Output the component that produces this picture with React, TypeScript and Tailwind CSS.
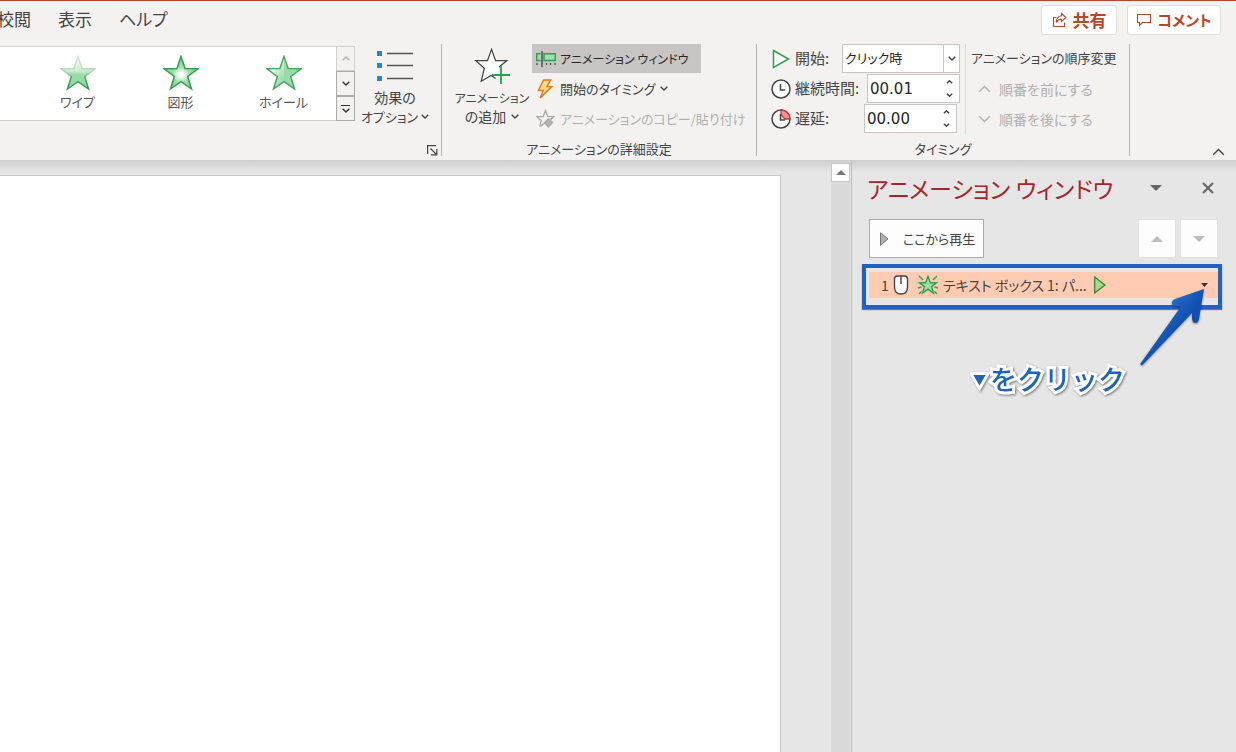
import type { ReactNode } from "react";

const STAR = "M18 1.5 L22.1 13.6 L35 13.8 L24.7 21.5 L28.5 34 L18 26.6 L7.5 34 L11.3 21.5 L1 13.8 L13.9 13.6 Z";

const tabs = ["校閲", "表示", "ヘルプ"];

const effects = [
  { name: "ワイプ", kind: "wipe" as const },
  { name: "図形", kind: "shape" as const },
  { name: "ホイール", kind: "wheel" as const },
];

function Chevron({ up = false, className = "h-[5px] w-2" }: { up?: boolean; className?: string }) {
  return (
    <svg aria-hidden viewBox="0 0 8 5" className={`shrink-0 ${className}`}>
      <path
        d={up ? "M0.7 4.2 L4 1 L7.3 4.2" : "M0.7 0.8 L4 4 L7.3 0.8"}
        fill="none"
        stroke="currentColor"
        strokeWidth="1.4"
        vectorEffect="non-scaling-stroke"
      />
    </svg>
  );
}

function EffectStar({ kind }: { kind: "wipe" | "shape" | "wheel" }) {
  return (
    <svg aria-hidden viewBox="0 0 36 36" className="h-9 w-9">
      <defs>
        <linearGradient id="wipe-fill" x1="0" y1="0" x2="0" y2="1">
          <stop offset="0" stopColor="#ffffff" />
          <stop offset="0.45" stopColor="#c9ead0" />
          <stop offset="0.55" stopColor="#9fdcab" />
          <stop offset="1" stopColor="#8fd49d" />
        </linearGradient>
        <linearGradient id="wipe-line" x1="0" y1="0" x2="0" y2="1">
          <stop offset="0" stopColor="#d3ecd8" />
          <stop offset="0.5" stopColor="#a9d7b2" />
          <stop offset="0.65" stopColor="#4aa862" />
          <stop offset="1" stopColor="#2f9a4c" />
        </linearGradient>
        <radialGradient id="shape-fill" cx="0.5" cy="0.56" r="0.4">
          <stop offset="0.1" stopColor="#ffffff" />
          <stop offset="0.35" stopColor="#d5f0da" />
          <stop offset="0.6" stopColor="#9fdcab" />
          <stop offset="1" stopColor="#8ed39c" />
        </radialGradient>
        <linearGradient id="wheel-fill" x1="0.1" y1="0.1" x2="0.7" y2="0.6">
          <stop offset="0.3" stopColor="#f5fbf6" />
          <stop offset="0.6" stopColor="#b9e5c2" />
          <stop offset="1" stopColor="#98d8a5" />
        </linearGradient>
      </defs>
      {kind === "wipe" && <path d={STAR} fill="url(#wipe-fill)" stroke="url(#wipe-line)" strokeWidth="1.5" />}
      {kind === "shape" && <path d={STAR} fill="url(#shape-fill)" stroke="#379e52" strokeWidth="1.5" />}
      {kind === "wheel" && (
        <>
          <path d={STAR} fill="url(#wheel-fill)" stroke="#43a75c" strokeWidth="1.5" />
          <path d="M18 4 L21.2 14.5 L32 15 L23.3 21.3 L26.5 31 L18 25 Z" fill="#9adaa7" />
        </>
      )}
    </svg>
  );
}

function Clock({ delay = false }: { delay?: boolean }) {
  return (
    <svg aria-hidden viewBox="0 0 20 20" className="h-5 w-5 shrink-0">
      <circle cx="10" cy="10" r="9" fill="#fcfcfc" stroke="#444" strokeWidth="1.5" />
      {delay && (
        <path d="M10 1 A9 9 0 0 1 19 10 L14 10 L10 6 Z" fill="#ff8f8f" stroke="#d13438" strokeWidth="1.3" />
      )}
      <path d="M9.5 5 V11 H14" fill="none" stroke="#444" strokeWidth="1.5" />
    </svg>
  );
}

function Group({ label, className, children }: { label?: string; className: string; children: ReactNode }) {
  return (
    <section
      aria-label={label}
      className={`flex h-28 shrink-0 flex-col justify-between border-r border-[#b3b0ad] ${className}`}
    >
      {children}
      {label && <p className="text-center text-[13px] leading-[14px]">{label}</p>}
    </section>
  );
}

function SpinField({ id, value, className }: { id: string; value: string; className: string }) {
  return (
    <div className={`flex h-[29px] border border-[#c8c6c4] bg-white ${className}`}>
      <input
        id={id}
        defaultValue={value}
        className="w-0 min-w-0 flex-1 pl-[2px] pt-[2px] font-['DejaVu_Sans',sans-serif] text-[15px] text-[#262626] outline-none"
      />
      <div className="flex w-5 flex-col items-center justify-around">
        <button type="button" aria-label="増やす" className="flex h-3 items-center">
          <Chevron up className="h-1 w-[7px]" />
        </button>
        <button type="button" aria-label="減らす" className="flex h-3 items-center">
          <Chevron className="h-1 w-[7px]" />
        </button>
      </div>
    </div>
  );
}

function TitleBar() {
  return (
    <header className="flex h-10 items-start justify-between border-t border-[#b7472a]">
      <nav className="-ml-[3px] flex gap-[27px] pt-[6px] text-[17px] leading-6 text-[#444]">
        {tabs.map((t) => (
          <button key={t} type="button" className="whitespace-nowrap">
            {t}
          </button>
        ))}
      </nav>
      <div className="flex gap-[10px] pr-[15px] pt-1 font-bold text-[#b7472a]">
        <button
          type="button"
          className="flex h-[30px] w-[76px] items-center justify-center gap-[5px] rounded-[3px] border border-[#e1dfdd] bg-white text-[17px]"
        >
          <svg aria-hidden viewBox="0 0 16 16" className="h-4 w-4 shrink-0" fill="none" stroke="currentColor" strokeWidth="1.1">
            <path d="M4.5 5.5 H1.5 V14.5 H12.5 V10.5" />
            <path d="M9.5 1.5 L14 5.5 L9.5 9.5 V7.3 C6.8 7.2 5.3 8.5 4.2 10.5 C4.4 6.5 6.5 4.2 9.5 3.8 Z" />
          </svg>
          共有
        </button>
        <button
          type="button"
          className="flex h-[30px] w-[94px] items-center justify-center gap-[5px] rounded-[3px] border border-[#e1dfdd] bg-white text-[15px]"
        >
          <svg aria-hidden viewBox="0 0 16 16" className="h-4 w-4 shrink-0" fill="none" stroke="currentColor" strokeWidth="1.1">
            <path d="M1.5 2.5 H14.5 V10.5 H6.5 L3.5 13.5 V10.5 H1.5 Z" />
          </svg>
          コメント
        </button>
      </div>
    </header>
  );
}

function GalleryGroup() {
  return (
    <Group className="w-[442px]">
      <div className="flex">
        <div className="mt-[2px] flex h-[75px] w-[355px] border-y border-[#d2d0ce] bg-white">
          <div className="flex flex-1 pl-[26px]">
            {effects.map((e) => (
              <button key={e.name} type="button" className="flex w-[103px] flex-col items-center pt-2 text-[13px] leading-[22px] text-[#555]">
                <EffectStar kind={e.kind} />
                {e.name}
              </button>
            ))}
          </div>
          <div className="-my-px flex w-[19px] flex-col text-[#333]">
            <button type="button" aria-label="前の行" disabled className="flex flex-1 items-center justify-center border border-[#d2d0ce] bg-[#f3f2f1] text-[#b3b0ad]">
              <Chevron up />
            </button>
            <button type="button" aria-label="次の行" className="flex flex-1 items-center justify-center border border-[#aeaaa8] bg-[#f3f2f1]">
              <Chevron />
            </button>
            <button type="button" aria-label="その他" className="flex flex-1 flex-col items-center justify-center gap-[2px] border border-[#aeaaa8] bg-[#f3f2f1]">
              <span className="h-px w-[9px] bg-[#333]" />
              <Chevron />
            </button>
          </div>
        </div>
        <button type="button" className="flex w-20 flex-col items-center pt-1 text-[14px] leading-[19px]">
          <svg aria-hidden viewBox="0 0 36 36" className="mb-1 h-9 w-9">
            <path d="M0 3h5v5H0z M0 15h5v5H0z M0 28h5v5H0z" fill="#1e8ad6" />
            <path d="M10 5.5h26 M10 17.5h26 M10 30.5h26" stroke="#555" strokeWidth="1.4" />
          </svg>
          <span>効果の</span>
          <span className="flex items-center gap-[3px] whitespace-nowrap text-[13px]">
            オプション
            <Chevron />
          </span>
        </button>
      </div>
      <button type="button" aria-label="アニメーションのオプション" className="mr-[3px] self-end">
        <svg aria-hidden viewBox="0 0 11 11" className="h-[11px] w-[11px]" fill="none" stroke="#444" strokeWidth="1.2">
          <path d="M0.6 9 V0.6 H9 M3.5 3.5 L9 9 M9.8 4 V9.8 H4" />
        </svg>
      </button>
    </Group>
  );
}

function AdvancedGroup() {
  return (
    <Group label="アニメーションの詳細設定" className="w-[315px]">
      <div className="flex">
        <button type="button" className="ml-[10px] flex w-20 shrink-0 flex-col items-center pt-1 text-[14px] leading-[19px]">
          <svg aria-hidden viewBox="0 0 40 40" className="mb-1 h-9 w-10">
            <path
              d="M24 34 L19 30.5 L8 37 L11.5 22.5 L2 14 H15 L19.5 1.5 L24 14 H36.5 L28 21"
              fill="#fbfdfe"
              stroke="#444"
              strokeWidth="1.4"
            />
            <path d="M30 20 V40 M20 30 H40" stroke="#27a04b" strokeWidth="2" />
          </svg>
          <span className="whitespace-nowrap text-[12px]">アニメーション</span>
          <span className="flex items-center gap-[5px] whitespace-nowrap">
            の追加
            <Chevron />
          </span>
        </button>
        <div className="flex flex-col items-start whitespace-nowrap text-[13px]">
          <button type="button" aria-pressed className="flex h-[29px] w-[169px] items-center gap-1 bg-[#c8c6c4] pl-1 text-[12px] text-[#262626]">
            <svg aria-hidden viewBox="0 0 20 16" className="h-4 w-5 shrink-0">
              <path d="M4.5 2.7 H0.7 V9.5 H4.5 M8 2.7 H19.3 V9.5 H8 Z" fill="#a4dbb0" stroke="#2f9e4d" strokeWidth="1.4" />
              <path d="M6 0 V16" stroke="#333" strokeWidth="1.2" />
              <path d="M1 12v2 M10.5 12v2 M14.5 12v2 M19 12v2" stroke="#444" strokeWidth="1.2" />
            </svg>
            アニメーション ウィンドウ
          </button>
          <button type="button" className="flex h-[31px] items-center gap-[5px] pl-1">
            <svg aria-hidden viewBox="0 0 20 22" className="h-[22px] w-[19px] shrink-0">
              <path d="M8 1.5 H15.5 L11.5 8.500 H16.500 L4.500 20.500 L7.500 12.500 H2.500 Z" fill="#ffd98a" stroke="#e07a1a" strokeWidth="1.5" />
            </svg>
            開始のタイミング
            <Chevron />
          </button>
          <button type="button" disabled className="flex h-[29px] items-center gap-[5px] pl-1 text-[#b1afad]">
            <svg aria-hidden viewBox="0 0 20 20" className="h-5 w-[19px] shrink-0" stroke="#aaa" strokeWidth="1.4">
              <path d="M5 15 L4 18 L5.5 11.5 L0.8 7.5 H7.5 L10 1 L12.5 7.5 H18.5 L15 11 M5 17.5 L9.5 14" fill="none" />
              <path d="M9 14 L13 10 L17.5 13.5 L13 18.5 Z M15 11 L19 7" fill="#b5b3b1" />
            </svg>
            アニメーションのコピー/貼り付け
          </button>
        </div>
      </div>
    </Group>
  );
}

function TimingGroup() {
  return (
    <Group label="タイミング" className="w-[373px]">
      <div className="flex whitespace-nowrap">
        <div className="ml-[14px] w-[195px] border-r border-[#dad8d6] text-[15px]">
          <div className="flex h-[30px] items-center pb-px">
            <svg aria-hidden viewBox="0 0 20 20" className="mr-1 h-5 w-5">
              <path d="M2.5 1.5 L17.5 10 L2.5 18.5 Z" fill="#fafdfa" stroke="#2f9e4d" strokeWidth="1.5" />
            </svg>
            <label htmlFor="start" className="pb-px">
              開始:
            </label>
            <div className="relative ml-auto mr-[5px] h-[29px] w-[118px]">
              <select
                id="start"
                className="h-full w-full appearance-none border border-[#c8c6c4] bg-white pb-[2px] pl-[2px] text-[13px] text-[#262626] outline-none"
              >
                <option>クリック時</option>
              </select>
              <span className="pointer-events-none absolute inset-y-0 right-0 flex w-[17px] items-center justify-center border-l border-[#c8c6c4]">
                <Chevron />
              </span>
            </div>
          </div>
          <div className="flex h-[30px] items-center pb-px">
            <Clock />
            <label htmlFor="duration" className="ml-1 pb-px">
              継続時間:
            </label>
            <SpinField id="duration" value="00.01" className="ml-auto mr-[5px] w-[93px]" />
          </div>
          <div className="flex h-[30px] items-center pb-px">
            <Clock delay />
            <label htmlFor="delay" className="ml-1 pb-px">
              遅延:
            </label>
            <SpinField id="delay" value="00.00" className="ml-auto mr-2 w-[93px]" />
          </div>
        </div>
        <div className="flex flex-col items-start pl-[5px] text-[14px]">
          <p className="flex h-[30px] items-center pb-[2px] text-[13px]">アニメーションの順序変更</p>
          <button type="button" disabled className="flex h-[30px] items-center gap-2 pl-[7px] text-[#b1afad]">
            <Chevron up className="h-2 w-[13px]" />
            順番を前にする
          </button>
          <button type="button" disabled className="flex h-[30px] items-center gap-2 pl-[7px] text-[#b1afad]">
            <Chevron className="h-2 w-[13px]" />
            順番を後にする
          </button>
        </div>
      </div>
    </Group>
  );
}

function AnimationPane() {
  return (
    <aside className="w-[385px] shrink-0 border-l border-[#bdbdbd] pt-[11px]">
      <div className="flex items-center pl-[15px] pr-[22px]">
        <h2 className="flex-1 whitespace-nowrap pt-px text-[23px] leading-[33px] text-[#a4262c]">アニメーション ウィンドウ</h2>
        <button type="button" aria-label="作業ウィンドウのオプション" className="mr-10">
          <svg aria-hidden viewBox="0 0 12 6" className="h-[6px] w-3">
            <path d="M0 0 H12 L6 6 Z" fill="#666" />
          </svg>
        </button>
        <button type="button" aria-label="閉じる">
          <svg aria-hidden viewBox="0 0 12 12" className="h-3 w-3">
            <path d="M1 1 L11 11 M11 1 L1 11" stroke="#666" strokeWidth="2" />
          </svg>
        </button>
      </div>

      <div className="mt-[14px] flex gap-1 pl-[17px] pr-[18px]">
        <button type="button" className="mr-auto flex h-[39px] w-[115px] items-center gap-[14px] border border-[#ababab] bg-[#fdfdfd] pl-[10px] text-[13px] whitespace-nowrap">
          <svg aria-hidden viewBox="0 0 9 14" className="h-[14px] w-[9px]">
            <path d="M0.5 0.7 L8 7 L0.5 13.3 Z" fill="#b0b0b0" stroke="#777" />
          </svg>
          ここから再生
        </button>
        <button type="button" disabled aria-label="前に移動" className="flex h-[39px] w-[38px] items-center justify-center border border-[#e1e1e1] bg-[#fdfdfd]">
          <svg aria-hidden viewBox="0 0 12 6" className="h-[6px] w-3">
            <path d="M0 6 H12 L6 0 Z" fill="#bbb" />
          </svg>
        </button>
        <button type="button" disabled aria-label="後に移動" className="flex h-[39px] w-[38px] items-center justify-center border border-[#e1e1e1] bg-[#fdfdfd]">
          <svg aria-hidden viewBox="0 0 12 6" className="h-[6px] w-3">
            <path d="M0 0 H12 L6 6 Z" fill="#bbb" />
          </svg>
        </button>
      </div>

      <div className="relative ml-[10px] mr-[14px] mt-[6px] border-4 border-[#1f63c0] pb-[7px] pl-[3px] pt-1 shadow-[0_1px_1px_#777]">
        <ul>
          <li className="flex h-[26px] items-center whitespace-nowrap bg-[#ffccb3] pl-3 text-[14px]">
            1
            <svg aria-hidden viewBox="0 0 16 20" className="ml-1 h-5 w-4">
              <path d="M1.5 4 Q1.5 1 4.5 1 H11.5 Q14.5 1 14.5 4 V12 Q14.5 19 8 19 Q1.5 19 1.5 12 Z" fill="#fff" stroke="#444" strokeWidth="1.4" />
              <path d="M8 1 V9" stroke="#444" strokeWidth="1.4" />
            </svg>
            <svg aria-hidden viewBox="0 0 22 22" className="ml-2 h-[22px] w-[22px]">
              <path d="M11 2.5 L13.3 8.8 H19.5 L14.6 12.6 L16.5 19 L11 15.2 L5.5 19 L7.4 12.6 L2.5 8.8 H8.7 Z" fill="#a0dcab" stroke="#2f9e4d" strokeWidth="1.4" />
              <path d="M2 2 L6 6 M20 2 L16 6 M1 14 L4.5 13 M21 14 L17.5 13 M2 20 L4.5 17.5 M20 20 L17.5 17.5" stroke="#2f9e4d" strokeWidth="1.4" />
            </svg>
            <span className="ml-1">テキスト ボックス 1: パ...</span>
            <svg aria-hidden viewBox="0 0 12 18" className="ml-[7px] h-[18px] w-3">
              <path d="M0.7 1 L11 9 L0.7 17 Z" fill="#a0dc8c" stroke="#3a7d2c" strokeWidth="1.2" />
            </svg>
            <button type="button" aria-label="効果のメニュー" className="ml-auto mr-[10px]">
              <svg aria-hidden viewBox="0 0 7 4" className="h-1 w-[7px]">
                <path d="M0 0 H7 L3.5 4 Z" fill="#333" />
              </svg>
            </button>
          </li>
        </ul>

        {/* Callout over the pane: arrow tip sits under the menu button */}
        <svg aria-hidden viewBox="0 0 68 82" className="absolute right-[10px] top-[20px] h-[82px] w-[68px] drop-shadow-[0_1px_1px_#0006]">
          <defs>
            <linearGradient id="arrow-fill" x1="0.3" y1="0.2" x2="0.6" y2="0.5">
              <stop offset="0.3" stopColor="#2468c8" />
              <stop offset="1" stopColor="#0f50b0" />
            </linearGradient>
          </defs>
          <path
            d="M64 1 L35 11 Q31 13 32 16 Q33 18.5 36 18 L41 18.5 L0.5 75.500 Q0 78 2.5 77 L52 25 L52 31 Q52.500 35 55.500 35 Q58.500 35 59 31 Z"
            fill="url(#arrow-fill)"
          />
        </svg>
        <p className="absolute left-[107px] top-[91px] flex items-center gap-1 whitespace-nowrap text-[27px] font-medium leading-10 text-[#1f63c0] [-webkit-text-stroke:6px_white] [font-feature-settings:normal] [paint-order:stroke_fill] drop-shadow-[1px_1px_1px_#0007]">
          <span className="text-[13px]">▼</span>をクリック
        </p>
      </div>
    </aside>
  );
}

export default function App() {
  return (
    <div className="flex min-h-screen flex-col overflow-hidden bg-[#f3f2f1] font-['Noto_Sans_CJK_JP',sans-serif] text-[#444] [font-feature-settings:'palt']">
      <TitleBar />
      <div className="flex pb-1 pt-1">
        <GalleryGroup />
        <AdvancedGroup />
        <TimingGroup />
        <div className="flex flex-1 items-end justify-end pr-[11px]">
          <button type="button" aria-label="リボンを折りたたむ">
            <Chevron up className="h-2 w-[13px]" />
          </button>
        </div>
      </div>

      <main className="flex flex-1 bg-[#e6e6e6] bg-[linear-gradient(#cdcdcd,#e6e6e6_12px)]">
        <div className="mr-[50px] mt-[15px] flex-1 border-r border-t border-[#c6c6c6] bg-white" />
        <div className="mr-px mt-[3px] w-[19px] bg-[#dadada]">
          <button type="button" aria-label="上へスクロール" className="flex h-[19px] w-full items-center justify-center border border-[#c6c6c6] bg-white">
            <svg aria-hidden viewBox="0 0 10 5" className="h-[5px] w-[10px]">
              <path d="M0 5 H10 L5 0 Z" fill="#777" />
            </svg>
          </button>
        </div>
        <AnimationPane />
      </main>
    </div>
  );
}
